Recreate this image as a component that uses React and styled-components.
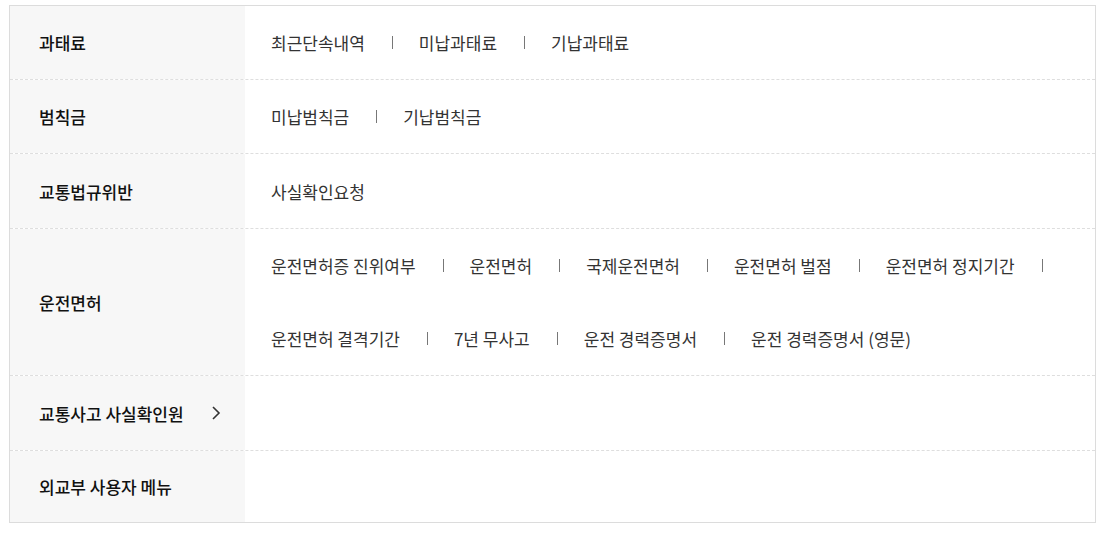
import React from "react";
import styled, { createGlobalStyle } from "styled-components";

const GlobalStyle = createGlobalStyle`
  html, body { margin: 0; padding: 0; background: #fff; }
  body { font-family: "Noto Sans CJK KR", "Noto Sans", sans-serif; }
  * { box-sizing: border-box; }
`;

const Page = styled.div`
  padding: 5px 10px 0 9px;
`;

const Table = styled.div`
  width: 1087px;
  border: 1px solid #dcdcdc;
`;

const Row = styled.div`
  display: grid;
  grid-template-columns: 235px 1fr;
  height: ${(p) => p.$h || 73}px;
  box-sizing: content-box;
  & + & {
    border-top: 1px dashed #dedede;
  }
`;

const Label = styled.div`
  background: #f7f7f7;
  display: flex;
  align-items: center;
  justify-content: space-between;
  padding: 0 24px 0 29px;
  font-size: 17px;
  font-weight: 500;
  color: #111;
`;

const Content = styled.div`
  padding: 0 26px;
  display: flex;
  align-items: center;
`;

const List = styled.ul`
  list-style: none;
  margin: 0;
  padding: 0;
  display: flex;
  flex-wrap: wrap;
`;

const Item = styled.li`
  font-size: 17px;
  line-height: 73px;
  color: #333;
  display: flex;
  align-items: center;
  &:not(:last-child)::after {
    content: "";
    display: block;
    width: 1px;
    height: 13px;
    background: #777;
    margin: 0 26px 0 27px;
  }
`;

const Chevron = () => (
  <svg width="10" height="16" viewBox="0 0 10 16" fill="none">
    <path d="M2 2 L8 8 L2 14" stroke="#333" strokeWidth="1.6" />
  </svg>
);

const rows = [
  { label: "과태료", items: ["최근단속내역", "미납과태료", "기납과태료"] },
  { label: "범칙금", items: ["미납범칙금", "기납범칙금"] },
  { label: "교통법규위반", items: ["사실확인요청"], h: 74 },
  {
    label: "운전면허",
    items: [
      "운전면허증 진위여부",
      "운전면허",
      "국제운전면허",
      "운전면허 벌점",
      "운전면허 정지기간",
      "운전면허 결격기간",
      "7년 무사고",
      "운전 경력증명서",
      "운전 경력증명서 (영문)",
    ],
    h: 146,
  },
  { label: "교통사고 사실확인원", items: [], arrow: true, h: 74 },
  { label: "외교부 사용자 메뉴", items: [], h: 71 },
];

export default function App() {
  return (
    <>
      <GlobalStyle />
      <Page>
        <Table>
          {rows.map((r) => (
            <Row key={r.label} $h={r.h}>
              <Label>
                <span>{r.label}</span>
                {r.arrow && <Chevron />}
              </Label>
              <Content>
                {r.items.length > 0 && (
                  <List>
                    {r.items.map((it) => (
                      <Item key={it}>{it}</Item>
                    ))}
                  </List>
                )}
              </Content>
            </Row>
          ))}
        </Table>
      </Page>
    </>
  );
}
